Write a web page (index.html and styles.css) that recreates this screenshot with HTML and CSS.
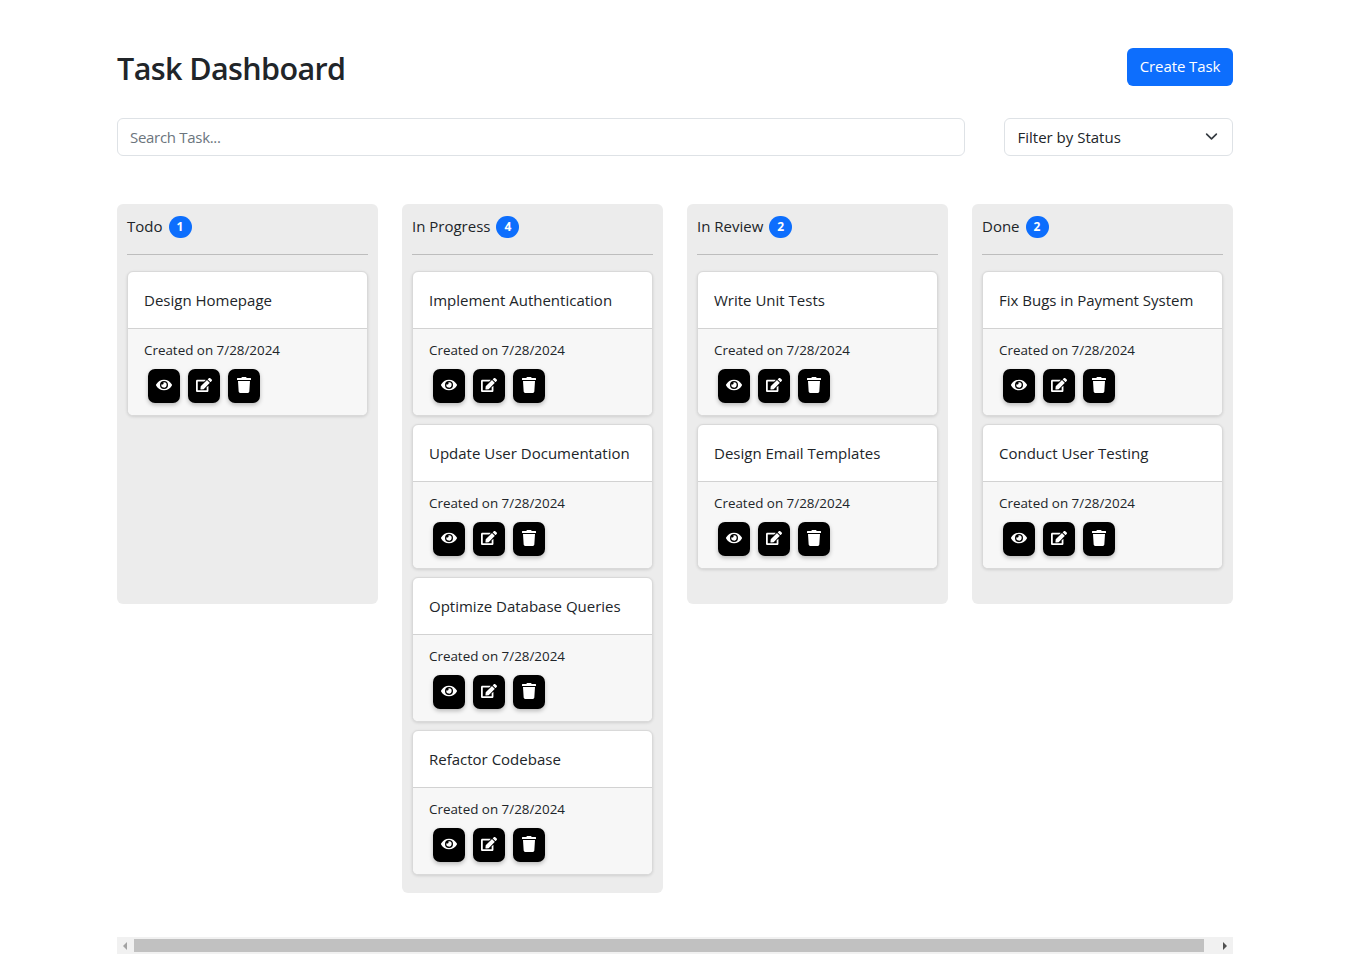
FILE: index.html
```html
<!DOCTYPE html>
<html lang="en">
<head>
<meta charset="utf-8">
<title>Task Dashboard</title>
<link rel="stylesheet" href="styles.css">
</head>
<body>
<svg class="defs" width="0" height="0" aria-hidden="true">
  <symbol id="i-eye" viewBox="0 0 576 512"><path d="M572.52 241.4C518.29 135.59 410.93 64 288 64S57.68 135.64 3.48 241.41a32.35 32.35 0 0 0 0 29.19C57.71 376.41 165.07 448 288 448s230.32-71.64 284.52-177.41a32.35 32.35 0 0 0 0-29.19zM288 400a144 144 0 1 1 144-144 143.93 143.93 0 0 1-144 144zm0-240a95.31 95.31 0 0 0-25.31 3.79 47.85 47.85 0 0 1-66.9 66.9A95.78 95.78 0 1 0 288 160z"/></symbol>
  <symbol id="i-edit" viewBox="0 0 576 512"><path d="M402.6 83.2l90.2 90.2c3.8 3.8 3.8 10 0 13.8L274.4 405.6l-92.8 10.3c-12.4 1.4-22.9-9.1-21.5-21.5l10.3-92.8L388.8 83.2c3.8-3.8 10-3.8 13.8 0zm162-22.9l-48.8-48.8c-15.2-15.2-39.9-15.2-55.2 0l-35.4 35.4c-3.8 3.8-3.8 10 0 13.8l90.2 90.2c3.8 3.8 10 3.8 13.8 0l35.4-35.4c15.2-15.3 15.2-40 0-55.2zM384 346.2V448H64V128h229.8c3.2 0 6.2-1.3 8.5-3.5l40-40c7.6-7.6 2.2-20.5-8.5-20.5H48C21.5 64 0 85.5 0 112v352c0 26.5 21.5 48 48 48h352c26.5 0 48-21.5 48-48V306.2c0-10.7-12.9-16-20.5-8.5l-40 40c-2.2 2.3-3.5 5.3-3.5 8.5z"/></symbol>
  <symbol id="i-trash" viewBox="0 0 448 512"><path d="M432 32H312l-9.4-18.7A24 24 0 0 0 281.1 0H166.8a23.72 23.72 0 0 0-21.4 13.3L136 32H16A16 16 0 0 0 0 48v32a16 16 0 0 0 16 16h416a16 16 0 0 0 16-16V48a16 16 0 0 0-16-16zM53.2 467a48 48 0 0 0 47.9 45h245.8a48 48 0 0 0 47.9-45L416 128H32z"/></symbol>
</svg>
<main class="container">
  <header class="top">
    <h1 class="title">Task Dashboard</h1>
    <button class="create">Create Task</button>
  </header>
  <div class="filters">
    <input class="search" type="text" placeholder="Search Task...">
    <div class="select">
      <span>Filter by Status</span>
      <svg class="chev" viewBox="0 0 16 16"><path d="M2 5l6 6 6-6" fill="none" stroke="#343a40" stroke-width="2" stroke-linecap="round" stroke-linejoin="round"/></svg>
    </div>
  </div>
  <div class="board">
    <section class="col col-short">
      <div class="col-head"><span>Todo</span><b class="badge">1</b></div>
      <hr class="rule">
      <article class="card">
        <div class="card-title">Design Homepage</div>
        <div class="card-foot"><p class="created">Created on 7/28/2024</p>
          <div class="acts">
            <button class="act"><svg class="ic-w"><use href="#i-eye"/></svg></button>
            <button class="act"><svg class="ic-w"><use href="#i-edit"/></svg></button>
            <button class="act"><svg class="ic-t"><use href="#i-trash"/></svg></button>
          </div></div>
      </article>
    </section>
    <section class="col">
      <div class="col-head"><span>In Progress</span><b class="badge">4</b></div>
      <hr class="rule">
      <article class="card">
        <div class="card-title">Implement Authentication</div>
        <div class="card-foot"><p class="created">Created on 7/28/2024</p>
          <div class="acts">
            <button class="act"><svg class="ic-w"><use href="#i-eye"/></svg></button>
            <button class="act"><svg class="ic-w"><use href="#i-edit"/></svg></button>
            <button class="act"><svg class="ic-t"><use href="#i-trash"/></svg></button>
          </div></div>
      </article>
      <article class="card">
        <div class="card-title">Update User Documentation</div>
        <div class="card-foot"><p class="created">Created on 7/28/2024</p>
          <div class="acts">
            <button class="act"><svg class="ic-w"><use href="#i-eye"/></svg></button>
            <button class="act"><svg class="ic-w"><use href="#i-edit"/></svg></button>
            <button class="act"><svg class="ic-t"><use href="#i-trash"/></svg></button>
          </div></div>
      </article>
      <article class="card">
        <div class="card-title">Optimize Database Queries</div>
        <div class="card-foot"><p class="created">Created on 7/28/2024</p>
          <div class="acts">
            <button class="act"><svg class="ic-w"><use href="#i-eye"/></svg></button>
            <button class="act"><svg class="ic-w"><use href="#i-edit"/></svg></button>
            <button class="act"><svg class="ic-t"><use href="#i-trash"/></svg></button>
          </div></div>
      </article>
      <article class="card">
        <div class="card-title">Refactor Codebase</div>
        <div class="card-foot"><p class="created">Created on 7/28/2024</p>
          <div class="acts">
            <button class="act"><svg class="ic-w"><use href="#i-eye"/></svg></button>
            <button class="act"><svg class="ic-w"><use href="#i-edit"/></svg></button>
            <button class="act"><svg class="ic-t"><use href="#i-trash"/></svg></button>
          </div></div>
      </article>
    </section>
    <section class="col col-short">
      <div class="col-head"><span>In Review</span><b class="badge">2</b></div>
      <hr class="rule">
      <article class="card">
        <div class="card-title">Write Unit Tests</div>
        <div class="card-foot"><p class="created">Created on 7/28/2024</p>
          <div class="acts">
            <button class="act"><svg class="ic-w"><use href="#i-eye"/></svg></button>
            <button class="act"><svg class="ic-w"><use href="#i-edit"/></svg></button>
            <button class="act"><svg class="ic-t"><use href="#i-trash"/></svg></button>
          </div></div>
      </article>
      <article class="card">
        <div class="card-title">Design Email Templates</div>
        <div class="card-foot"><p class="created">Created on 7/28/2024</p>
          <div class="acts">
            <button class="act"><svg class="ic-w"><use href="#i-eye"/></svg></button>
            <button class="act"><svg class="ic-w"><use href="#i-edit"/></svg></button>
            <button class="act"><svg class="ic-t"><use href="#i-trash"/></svg></button>
          </div></div>
      </article>
    </section>
    <section class="col col-short">
      <div class="col-head"><span>Done</span><b class="badge">2</b></div>
      <hr class="rule">
      <article class="card">
        <div class="card-title">Fix Bugs in Payment System</div>
        <div class="card-foot"><p class="created">Created on 7/28/2024</p>
          <div class="acts">
            <button class="act"><svg class="ic-w"><use href="#i-eye"/></svg></button>
            <button class="act"><svg class="ic-w"><use href="#i-edit"/></svg></button>
            <button class="act"><svg class="ic-t"><use href="#i-trash"/></svg></button>
          </div></div>
      </article>
      <article class="card">
        <div class="card-title">Conduct User Testing</div>
        <div class="card-foot"><p class="created">Created on 7/28/2024</p>
          <div class="acts">
            <button class="act"><svg class="ic-w"><use href="#i-eye"/></svg></button>
            <button class="act"><svg class="ic-w"><use href="#i-edit"/></svg></button>
            <button class="act"><svg class="ic-t"><use href="#i-trash"/></svg></button>
          </div></div>
      </article>
    </section>
  </div>
  <div class="hscroll">
    <span class="arrow arrow-l"></span>
    <span class="thumb"></span>
    <span class="arrow arrow-r"></span>
  </div>
</main>
</body>
</html>
```
FILE: styles.css
```css
* { box-sizing: border-box; }
html, body { margin: 0; height: 954px; overflow: hidden; background: #fff; }
body { font-family: "Open Sans", "Noto Sans", sans-serif; color: #212529; font-size: 15px; line-height: 24px; }
.defs { display: block; height: 0; }
.container { width: 1116px; margin: 0 auto; padding-top: 48px; }
.top { display: flex; justify-content: space-between; align-items: flex-start; height: 38px; }
.title { margin: -1px 0 0; font-size: 30.5px; line-height: 42px; font-weight: 560; letter-spacing: -0.6px; }
.create { width: 106px; height: 38px; border: 0; border-radius: 6px; background: #0d6efd; color: #fff; font: inherit; letter-spacing: -0.1px; padding: 0 0 2px; }
.filters { display: flex; justify-content: space-between; margin-top: 32px; }
.search { width: 848px; height: 38px; border: 1px solid #dee2e6; border-radius: 6px; padding: 0 12px; font: inherit; letter-spacing: -0.3px; color: #212529; outline: 0; }
.search::placeholder { color: #6c757d; opacity: 1; }
.select { width: 229px; height: 38px; border: 1px solid #dee2e6; border-radius: 6px; padding: 0 14px 0 12.5px; display: flex; align-items: center; justify-content: space-between; }
.chev { width: 13px; height: 13px; display: block; margin-top: -1px; }
.board { display: flex; align-items: flex-start; gap: 24px; margin-top: 48px; }
.col { width: 261px; padding: 10px 10px 18px; background: #ececec; border-radius: 6px; }
.col-short { height: 400px; }
.col-head { display: flex; align-items: center; gap: 6px; height: 24px; }
.badge { width: 23px; height: 22px; margin-top: 1px; border-radius: 11px; background: #0d6efd; color: #fff; font-size: 12px; line-height: 22px; font-weight: 700; text-align: center; }
.rule { margin: 16px 0 16px; border: 0; border-top: 1px solid #bdbdbd; height: 0; }
.card { background: #fff; border: 1px solid #d9d9d9; border-radius: 6px; box-shadow: 0 1px 3px rgba(0,0,0,.12); overflow: hidden; margin-bottom: 8px; height: 145px; }
.card:last-child { margin-bottom: 0; }
.card-title { height: 57px; padding: 16px 16px 0; border-bottom: 1px solid #d2d2d2; }
.card-foot { background: #f7f7f7; height: 86px; padding: 9px 16px 0; }
.created { margin: 0; font-size: 13.4px; line-height: 24px; }
.acts { display: flex; gap: 8px; margin: 7px 0 0 4px; }
.act { width: 32px; height: 34px; padding: 0 0 2px; border: 0; border-radius: 7px; background: #000; box-shadow: 0 2px 4px rgba(0,0,0,.25); display: flex; align-items: center; justify-content: center; }
.ic-w { width: 16px; height: 16px; fill: #fff; display: block; }
.ic-t { width: 14px; height: 16px; fill: #fff; display: block; }
.hscroll { display: flex; align-items: center; margin-top: 44px; height: 17px; background: #f1f1f1; padding: 0 6px; }
.thumb { width: 1070px; height: 13px; margin-left: 7px; background: #c1c1c1; }
.arrow { width: 0; height: 0; border-top: 4px solid transparent; border-bottom: 4px solid transparent; }
.arrow-l { border-right: 4px solid #a3a3a3; }
.arrow-r { margin-left: 19px; border-left: 4px solid #505050; }
```
